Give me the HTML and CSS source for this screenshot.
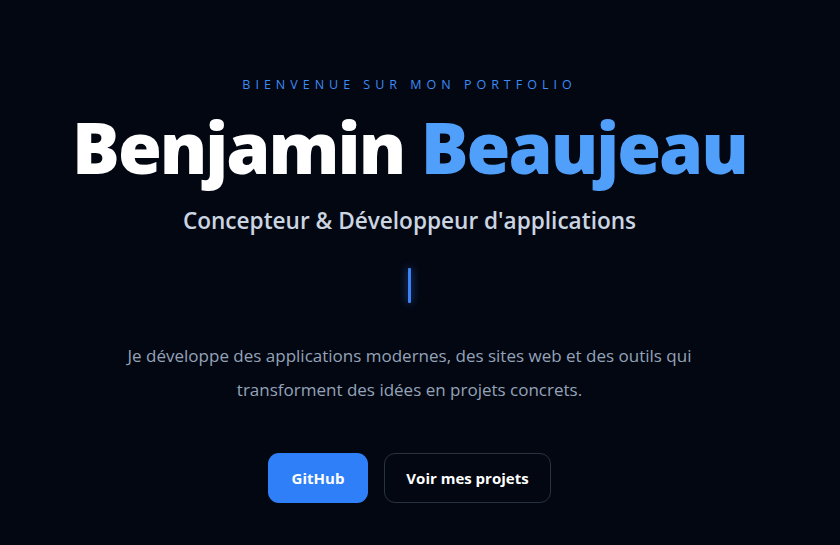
FILE: index.html
```html
<!DOCTYPE html>
<html lang="fr">
<head>
<meta charset="utf-8">
<title>Benjamin Beaujeau</title>
<link rel="stylesheet" href="styles.css">
</head>
<body>
<main class="hero">
  <p class="tagline">Bienvenue sur mon portfolio</p>
  <h1 class="name">Benjamin <span class="accent">Beaujeau</span></h1>
  <p class="role">Concepteur &amp; Développeur d'applications</p>
  <div class="cursor"></div>
  <p class="intro">Je développe des applications modernes, des sites web et des outils qui transforment des idées en projets concrets.</p>
  <div class="actions">
    <a class="btn btn-primary" href="#">GitHub</a>
    <a class="btn btn-outline" href="#">Voir mes projets</a>
  </div>
</main>
</body>
</html>
```
FILE: styles.css
```css
html, body {
  margin: 0;
  padding: 0;
  background: #030712;
  height: 100%;
}
body {
  font-family: "Open Sans", "Noto Sans", "Liberation Sans", sans-serif;
  color: #f8fafc;
  padding-right: 21px;
  box-sizing: border-box;
}
.hero {
  display: flex;
  flex-direction: column;
  align-items: center;
  text-align: center;
  padding-top: 76px;
}
.tagline {
  margin: 0;
  font-size: 12.5px;
  letter-spacing: 0.4em;
  text-transform: uppercase;
  color: #3b8cf6;
  line-height: 18px;
}
.name {
  margin: 8px 0 0;
  font-family: "Noto Sans", "Open Sans", sans-serif;
  font-weight: 900;
  font-size: 71px;
  line-height: 90px;
  letter-spacing: -2px;
  color: #ffffff;
}
.accent {
  color: #4f9ffb;
}
.role {
  margin: 14px 0 0;
  font-size: 22.6px;
  font-weight: 600;
  color: #cbd5e1;
  line-height: 30px;
}
.cursor {
  width: 3px;
  height: 35px;
  margin-top: 32px;
  background: #3b82f6;
  border-radius: 1px;
  box-shadow: 0 0 8px rgba(59, 130, 246, 0.7);
}
.intro {
  margin: 36px 0 0;
  max-width: 600px;
  font-size: 17px;
  line-height: 34px;
  color: #94a3b8;
}
.actions {
  display: flex;
  gap: 16px;
  margin-top: 46px;
}
.btn {
  display: flex;
  align-items: center;
  justify-content: center;
  height: 50px;
  box-sizing: border-box;
  border-radius: 11px;
  font-size: 15px;
  font-weight: 700;
  text-decoration: none;
  color: #ffffff;
}
.btn-primary {
  width: 100px;
  background: #2f80f8;
}
.btn-outline {
  width: 167px;
  border: 1px solid #293241;
  background: transparent;
}
```
